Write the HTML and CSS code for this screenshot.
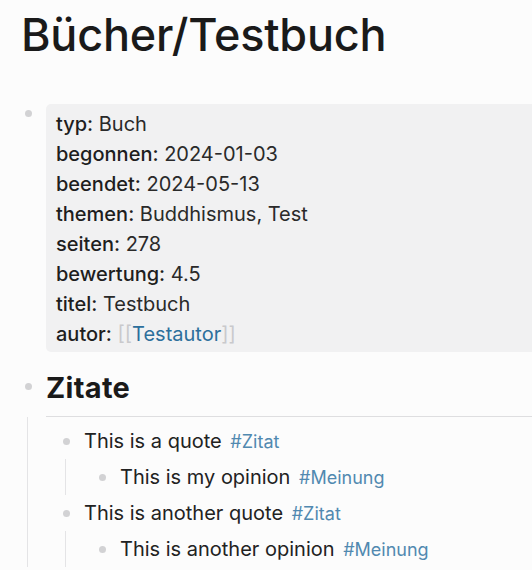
FILE: index.html
```html
<!DOCTYPE html>
<html lang="de">
<head>
<meta charset="utf-8">
<title>Bücher/Testbuch</title>
<link rel="stylesheet" href="styles.css">
</head>
<body>
<div class="page">
  <h1 class="title">Bücher/Testbuch</h1>

  <div class="block props-block">
    <div class="bullet-col"><span class="bullet"></span></div>
    <div class="content">
      <div class="props">
        <div class="prop"><span class="key">typ:</span> Buch</div>
        <div class="prop"><span class="key">begonnen:</span> 2024-01-03</div>
        <div class="prop"><span class="key">beendet:</span> 2024-05-13</div>
        <div class="prop"><span class="key">themen:</span> Buddhismus, Test</div>
        <div class="prop"><span class="key">seiten:</span> 278</div>
        <div class="prop"><span class="key">bewertung:</span> 4.5</div>
        <div class="prop"><span class="key">titel:</span> Testbuch</div>
        <div class="prop"><span class="key">autor:</span> <span class="bracket">[[</span><span class="link">Testautor</span><span class="bracket">]]</span></div>
      </div>
    </div>
  </div>

  <div class="block heading-block">
    <div class="bullet-col"><span class="bullet"></span></div>
    <div class="content">
      <h2 class="heading">Zitate</h2>
    </div>
  </div>
  <div class="children">
    <div class="block child">
      <div class="bullet-col"><span class="bullet"></span></div>
      <div class="content text">This is a quote <span class="tag">#Zitat</span></div>
    </div>
    <div class="children nested">
      <div class="block child">
        <div class="bullet-col"><span class="bullet"></span></div>
        <div class="content text">This is my opinion <span class="tag">#Meinung</span></div>
      </div>
    </div>
    <div class="block child">
      <div class="bullet-col"><span class="bullet"></span></div>
      <div class="content text">This is another quote <span class="tag">#Zitat</span></div>
    </div>
    <div class="children nested">
      <div class="block child">
        <div class="bullet-col"><span class="bullet"></span></div>
        <div class="content text">This is another opinion <span class="tag">#Meinung</span></div>
      </div>
    </div>
  </div>
</div>
</body>
</html>
```

FILE: styles.css
```css
html, body {
  margin: 0;
  padding: 0;
  background: #fcfcfc;
  overflow: hidden;
}

body {
  font-family: Inter, "Noto Sans", sans-serif;
  color: #222222;
}

.page {
  width: 640px;
  padding-left: 19px;
}

.title {
  margin: 8px 0 0 2px;
  font-size: 45px;
  line-height: 54px;
  font-weight: 500;
  color: #1a1a1a;
  letter-spacing: -0.2px;
}

.block {
  display: flex;
  gap: 9px;
}

.bullet-col {
  width: 18px;
  flex: none;
  display: flex;
  justify-content: center;
  padding-top: 6px;
}

.bullet {
  width: 7px;
  height: 7px;
  border-radius: 50%;
  background: #d2d2d4;
}

.content {
  flex: 1;
  min-width: 0;
}

.props-block {
  margin-top: 42px;
}

.props {
  background: #f1f1f2;
  border-radius: 5px;
  padding: 5px 10px 3px;
  font-size: 20px;
  line-height: 30px;
  color: #2a2a2a;
}

.key {
  font-weight: 500;
  color: #1e1e1e;
}

.bracket {
  color: #c9c9cc;
}

.link {
  color: #2c6f9c;
}

.heading-block {
  margin-top: 10px;
}

.heading-block .bullet-col {
  padding-top: 21px;
}

.heading {
  margin: 0;
  font-size: 29px;
  font-weight: 700;
  line-height: 38px;
  padding: 7px 0 9px 0;
  border-bottom: 1px solid #dedee0;
  color: #1a1a1a;
  letter-spacing: 0.3px;
}

.children {
  margin-left: 8px;
  border-left: 1px solid #e4e4e6;
  padding-left: 29px;
  padding-top: 6px;
}

.children.nested {
  margin-left: 8px;
  padding-left: 27px;
  padding-top: 0;
}

.child {
  padding: 4px 0;
}

.child .bullet-col {
  padding-top: 11px;
}

.text {
  font-size: 20px;
  line-height: 28px;
  color: #222222;
}

.tag {
  font-size: 18px;
  line-height: 20px;
  color: #5189b0;
  margin-left: 3px;
}
```
